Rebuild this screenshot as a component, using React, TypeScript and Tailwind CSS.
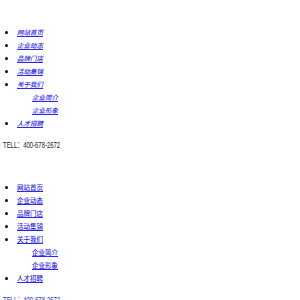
const ITEMS = ['网站首页', '企业动态', '品牌门店', '活动集锦', '关于我们'];
const SUB = ['企业简介', '企业形象'];

function Block({ italic, blueTel }: { italic: boolean; blueTel: boolean }) {
  const link = `text-[#2a2aee] underline font-medium ${italic ? 'italic' : ''}`;
  return (
    <div className="h-[155px] pt-[26px]">
      <ul className="list-disc pl-[17px] text-[6.5px] leading-[13px] marker:text-black">
        {ITEMS.map((t) => (
          <li key={t}>
            <a className={link}>{t}</a>
          </li>
        ))}
        <li className="list-none">
          <ul className="pl-[15px]">
            {SUB.map((t) => (
              <li key={t}>
                <a className={link}>{t}</a>
              </li>
            ))}
          </ul>
        </li>
        <li>
          <a className={link}>人才招聘</a>
        </li>
      </ul>
      <p
        className={`mt-[9px] pl-[3px] text-[9px] leading-[13px] ${blueTel ? 'text-[#2a2aee]' : 'text-[#222]'}`}
        style={{ fontFamily: '"Liberation Sans", "Noto Sans CJK SC", sans-serif' }}
      >
        <span className="inline-block origin-left scale-x-[0.66]">TELL：400-678-2672</span>
      </p>
    </div>
  );
}

export default function App() {
  return (
    <div
      className="h-[300px] w-[300px] overflow-hidden bg-white"
      style={{ fontFamily: '"Noto Sans CJK SC", "Liberation Sans", sans-serif' }}
    >
      <Block italic blueTel={false} />
      <Block italic={false} blueTel />
    </div>
  );
}
